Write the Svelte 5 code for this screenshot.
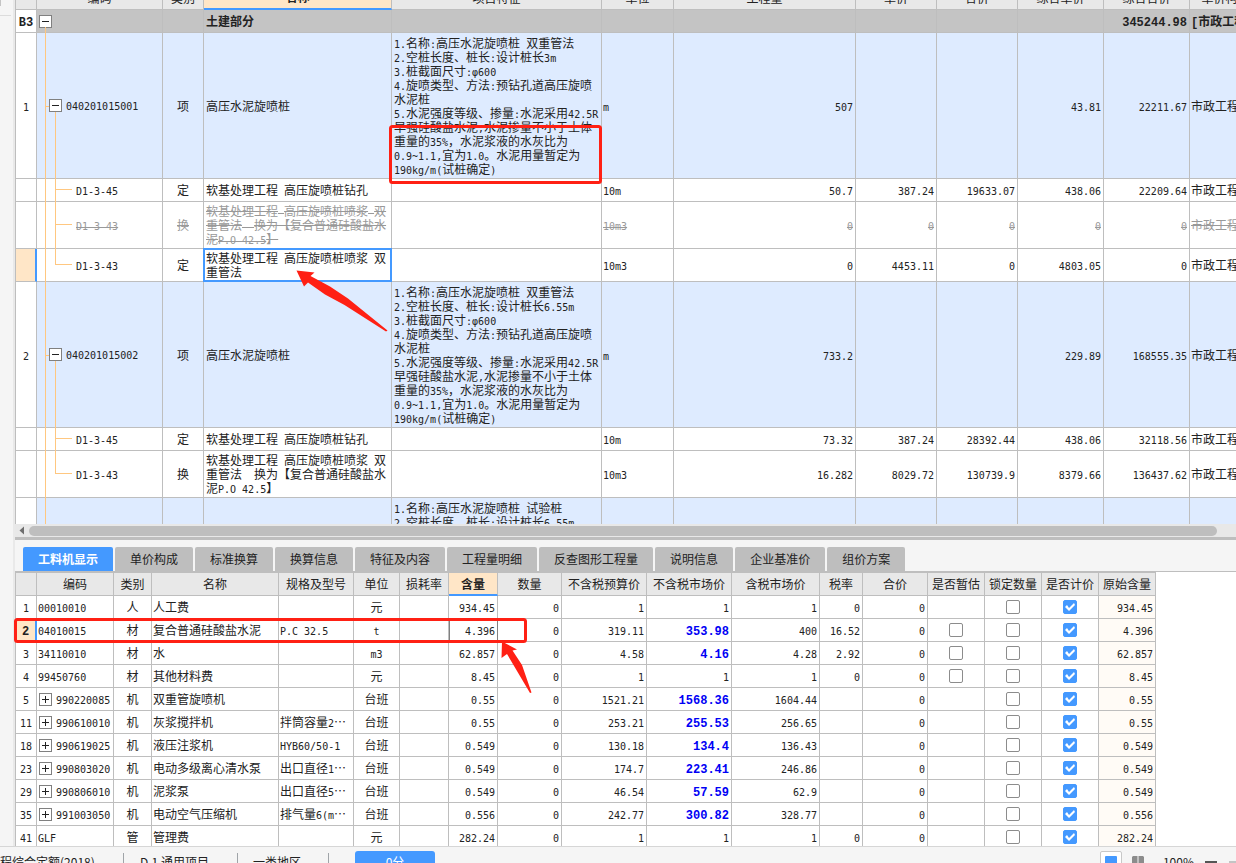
<script>
  const billColumns = [
    { label: '', w: 21 },
    { label: '编码', w: 126 },
    { label: '类别', w: 41 },
    { label: '名称', w: 188, current: true },
    { label: '项目特征', w: 210 },
    { label: '单位', w: 72 },
    { label: '工程量', w: 182 },
    { label: '单价', w: 81 },
    { label: '合价', w: 81 },
    { label: '综合单价', w: 86 },
    { label: '综合合价', w: 86 },
    { label: '单价构成文件', w: 0 }
  ];

  const features = (len, kind) => `1.名称:高压水泥旋喷桩 ${kind}
2.空桩长度、桩长:设计桩长${len}m
3.桩截面尺寸:φ600
4.旋喷类型、方法:预钻孔道高压旋喷
水泥桩
5.水泥强度等级、掺量:水泥采用42.5R
早强硅酸盐水泥,水泥掺量不小于土体
重量的35%，水泥浆液的水灰比为
0.9~1.1,宜为1.0。水泥用量暂定为
190kg/m(试桩确定)`;

  const bill = [
    { kind: 'group', h: 23, no: 'B3', code: '', type: '', name: '土建部分', feat: '', unit: '', nums: ['', '', '', '', '345244.98'], file: '[市政工程' },
    { kind: 'item', h: 146, no: '1', code: '040201015001', type: '项', name: '高压水泥旋喷桩', feat: features('3', '双重管法'), unit: 'm', nums: ['507', '', '', '43.81', '22211.67'], file: '市政工程' },
    { kind: 'quota', h: 23, no: '', code: 'D1-3-45', type: '定', name: '软基处理工程 高压旋喷桩钻孔', feat: '', unit: '10m', nums: ['50.7', '387.24', '19633.07', '438.06', '22209.64'], file: '市政工程' },
    { kind: 'quota', struck: true, h: 47, no: '', code: 'D1-3-43', type: '换', name: '软基处理工程 高压旋喷桩喷浆 双\n重管法  换为【复合普通硅酸盐水\n泥P.O 42.5】', feat: '', unit: '10m3', nums: ['0', '0', '0', '0', '0'], file: '市政工程' },
    { kind: 'quota', last: true, current: true, h: 33, no: '', code: 'D1-3-43', type: '定', name: '软基处理工程 高压旋喷桩喷浆 双\n重管法', feat: '', unit: '10m3', nums: ['0', '4453.11', '0', '4803.05', '0'], file: '市政工程' },
    { kind: 'item', h: 146, no: '2', code: '040201015002', type: '项', name: '高压水泥旋喷桩', feat: features('6.55', '双重管法'), unit: 'm', nums: ['733.2', '', '', '229.89', '168555.35'], file: '市政工程' },
    { kind: 'quota', h: 23, no: '', code: 'D1-3-45', type: '定', name: '软基处理工程 高压旋喷桩钻孔', feat: '', unit: '10m', nums: ['73.32', '387.24', '28392.44', '438.06', '32118.56'], file: '市政工程' },
    { kind: 'quota', last: true, h: 47, no: '', code: 'D1-3-43', type: '换', name: '软基处理工程 高压旋喷桩喷浆 双\n重管法  换为【复合普通硅酸盐水\n泥P.O 42.5】', feat: '', unit: '10m3', nums: ['16.282', '8029.72', '130739.9', '8379.66', '136437.62'], file: '市政工程' },
    { kind: 'item', h: 146, no: '3', code: '040201015003', type: '项', name: '高压水泥旋喷桩', feat: features('6.55', '试验桩'), unit: 'm', nums: ['', '', '', '', ''], file: '市政工程' }
  ];

  const tabs = ['工料机显示', '单价构成', '标准换算', '换算信息', '特征及内容', '工程量明细', '反查图形工程量', '说明信息', '企业基准价', '组价方案'];

  const resColumns = [
    ['', 21], ['编码', 77], ['类别', 38], ['名称', 127], ['规格及型号', 75], ['单位', 46],
    ['损耗率', 49], ['含量', 49], ['数量', 64], ['不含税预算价', 85], ['不含税市场价', 85],
    ['含税市场价', 88], ['税率', 43], ['合价', 65], ['是否暂估', 57], ['锁定数量', 57],
    ['是否计价', 57], ['原始含量', 57]
  ];

  // no, code, type, name, spec, unit, content, budget price, market price, taxed price, tax rate, provisional box, expandable
  const resources = [
    ['1', '00010010', '人', '人工费', '', '元', '934.45', '1', '1', '1', '0', false, false],
    ['2', '04010015', '材', '复合普通硅酸盐水泥', 'P.C 32.5', 't', '4.396', '319.11', '353.98', '400', '16.52', true, false],
    ['3', '34110010', '材', '水', '', 'm3', '62.857', '4.58', '4.16', '4.28', '2.92', true, false],
    ['4', '99450760', '材', '其他材料费', '', '元', '8.45', '1', '1', '1', '0', true, false],
    ['5', '990220085', '机', '双重管旋喷机', '', '台班', '0.55', '1521.21', '1568.36', '1604.44', '', false, true],
    ['11', '990610010', '机', '灰浆搅拌机', '拌筒容量2…', '台班', '0.55', '253.21', '255.53', '256.65', '', false, true],
    ['18', '990619025', '机', '液压注浆机', 'HYB60/50-1', '台班', '0.549', '130.18', '134.4', '136.43', '', false, true],
    ['23', '990803020', '机', '电动多级离心清水泵', '出口直径1…', '台班', '0.549', '174.7', '223.41', '246.86', '', false, true],
    ['29', '990806010', '机', '泥浆泵', '出口直径5…', '台班', '0.549', '46.54', '57.59', '62.9', '', false, true],
    ['35', '991003050', '机', '电动空气压缩机', '排气量6(m…', '台班', '0.556', '242.77', '300.82', '328.77', '', false, true],
    ['41', 'GLF', '管', '管理费', '', '元', '282.24', '1', '1', '1', '0', false, false]
  ];

  // Splits a string into runs so that Latin text gets the half-width face.
  const runs = (s) =>
    s.split(/([\x20-\x7eφ]+)/).filter(Boolean).map((t) => ({ t, latin: /^[\x20-\x7eφ]/.test(t) }));
</script>

{#snippet mixed(s)}{#each runs(s) as r}{#if r.latin}<span class="lat">{r.t}</span>{:else}<span>{r.t}</span>{/if}{/each}{/snippet}

{#snippet toggle(plus)}
  <button class="toggle" aria-label={plus ? '展开' : '折叠'}>
    <svg viewBox="0 0 11 11" width="11" height="11" aria-hidden="true">
      <path d={plus ? 'M2 5.5h7M5.5 2v7' : 'M2 5.5h7'} stroke="#222" fill="none" />
    </svg>
  </button>
{/snippet}

<div class="page" lang="zh-CN">
  <div class="body">
    <aside class="rail"><i class="stub"></i><i class="rule"></i></aside>

    <main>
      <section class="bill">
        <table>
          <colgroup>
            {#each billColumns as c}<col style={c.w ? `width:${c.w}px` : ''} />{/each}
          </colgroup>
          <thead>
            <tr>
              {#each billColumns as c}<th class:current={c.current}>{c.label}</th>{/each}
            </tr>
          </thead>
          <tbody>
            {#each bill as r}
              <tr class={r.kind} class:struck={r.struck} style="height:{r.h}px">
                <td class="no" class:current={r.current}><span class="lat">{r.no}</span></td>
                <td class="code">
                  {#if r.kind === 'group'}
                    <i class="root-start"></i>
                    <div class="node l0">{@render toggle(false)}</div>
                  {:else}
                    <i class="root"></i>
                    {#if r.kind === 'item'}
                      <i class="twig"></i><i class="down"></i>
                      <div class="node l1">{@render toggle(false)}<span class="lat">{r.code}</span></div>
                    {:else}
                      <i class="stem" class:last={r.last}></i><i class="branch"></i>
                      <div class="node l2"><span class="lat">{r.code}</span></div>
                    {/if}
                  {/if}
                </td>
                <td class="mid">{r.type}</td>
                <td class="pre" class:picked={r.current}>{@render mixed(r.name)}</td>
                <td class="pre">{@render mixed(r.feat)}</td>
                <td><span class="lat">{r.unit}</span></td>
                {#each r.nums as n}<td class="num"><span class="lat">{n}</span></td>{/each}
                <td>{@render mixed(r.file)}</td>
              </tr>
            {/each}
          </tbody>
        </table>
      </section>

      <div class="hscroll">
        <svg width="14" height="13" viewBox="0 0 14 13" aria-hidden="true"><path d="M9 2.5v8L4.500 6.500z" fill="#6e6e6e" /></svg>
        <div class="thumb"></div>
      </div>
      <div class="splitter"></div>

      <nav class="tabs">
        {#each tabs as t, i}<button class:active={i === 0}>{t}</button>{/each}
      </nav>

      <section class="res">
        <table>
          <colgroup>
            {#each resColumns as c}<col style="width:{c[1]}px" />{/each}
          </colgroup>
          <thead>
            <tr>
              {#each resColumns as c}<th class:current={c[0] === '含量'}>{c[0]}</th>{/each}
            </tr>
          </thead>
          <tbody>
            {#each resources as r, i}
              <tr>
                <td class="no" class:current={i === 1}><span class="lat">{r[0]}</span></td>
                <td>
                  {#if r[12]}
                    <div class="node l0">{@render toggle(true)}<span class="lat">{r[1]}</span></div>
                  {:else}<span class="lat">{r[1]}</span>{/if}
                </td>
                <td class="mid">{r[2]}</td>
                <td>{r[3]}</td>
                <td>{@render mixed(r[4])}</td>
                <td class="mid">{@render mixed(r[5])}</td>
                <td></td>
                <td class="num" class:focus={i === 1}><span class="lat">{r[6]}</span></td>
                <td class="num"><span class="lat">0</span></td>
                <td class="num"><span class="lat">{r[7]}</span></td>
                <td class="num" class:market={r[8] !== '1'}><span class="lat">{r[8]}</span></td>
                <td class="num"><span class="lat">{r[9]}</span></td>
                <td class="num"><span class="lat">{r[10]}</span></td>
                <td class="num"><span class="lat">0</span></td>
                <td class="mid">{#if r[11]}<input type="checkbox" aria-label="是否暂估" />{/if}</td>
                <td class="mid"><input type="checkbox" aria-label="锁定数量" /></td>
                <td class="mid"><input type="checkbox" aria-label="是否计价" checked /></td>
                <td class="num origin"><span class="lat">{r[6]}</span></td>
              </tr>
            {/each}
          </tbody>
        </table>
      </section>
    </main>
  </div>

  <footer>
    <div class="status">
      <span class="seg first">程综合定额(2018)</span>
      <span class="seg second">D.1 通用项目</span>
      <span class="seg third">一类地区</span>
      <button class="score">0分</button>
      <div class="view">
        <button class="mode on" aria-label="单窗口">
          <svg width="12" height="12" viewBox="0 0 12 12" aria-hidden="true"><path d="M1 0h10a1 1 0 0 1 1 1v7H7.500v2H10v2H2v-2h2.500V8H0V1a1 1 0 0 1 1-1z" fill="#4499ff" /></svg>
        </button>
        <button class="mode" aria-label="双窗口">
          <svg width="12" height="12" viewBox="0 0 12 12" aria-hidden="true"><path d="M1 0h4.500v12H0V1zM6.500 0H11l1 1v11H6.500z" fill="#8c8c8c" /></svg>
        </button>
        <span class="zoom">100%</span>
        <i class="minus"></i>
        <i class="track"></i>
      </div>
    </div>
  </footer>

  <svg class="marks" aria-hidden="true">
    <g fill="none" stroke="#ff2014" stroke-width="3">
      <rect x="390.5" y="126.500" width="210" height="56" rx="2" />
      <rect x="15.500" y="619.500" width="510" height="22" rx="2" />
    </g>
    <g fill="#ff2014">
      <path d="M296.500 270.500L314.500 272.500L310.500 276L330 286.500L348 298.500L387.500 330.500L386 331.500L344.500 305L325 294.500L308 282.500L304 286.500z" />
      <path d="M502 641.500L517 649.500L512.500 650.500L522 665L531.500 692.500L530 693L517 671L507 654L501.500 658z" />
    </g>
  </svg>
</div>

<style>
  :global(body) {
    margin: 0;
    overflow: hidden;
  }
  .page {
    position: relative;
    height: 100vh;
    display: flex;
    flex-direction: column;
    background: #f5f5f5;
    color: #222;
    font: 12px/14px 'Noto Sans CJK SC', sans-serif;
  }
  button {
    font: inherit;
    color: inherit;
    border: 0;
    padding: 0;
    margin: 0;
    background: none;
  }
  .body {
    flex: 1;
    min-height: 0;
    display: flex;
  }
  .rail {
    width: 13px;
    flex: none;
    border-right: 2px solid #e9e9e9;
  }
  .rail i {
    display: block;
  }
  .stub {
    width: 1px;
    height: 6px;
    background: #c4c4c4;
  }
  .rule {
    width: 11px;
    height: 1px;
    margin-top: 9px;
    background: #dcdcdc;
  }
  main {
    flex: 1;
    min-width: 0;
    display: grid;
    grid-template-columns: minmax(0, 1fr);
    grid-template-rows: minmax(0, 524fr) auto auto auto minmax(0, 274fr);
  }
  section {
    overflow: hidden;
    background: #fff;
  }

  /* grids */
  table {
    table-layout: fixed;
    border-collapse: separate;
    border-spacing: 0;
    border-left: 1px solid #bebebe;
  }
  .bill table {
    width: 100%;
    min-width: 1271px;
    margin-top: -14px;
  }
  .res table {
    width: 1px;
    border-top: 1px solid #bebebe;
  }
  th,
  td {
    box-sizing: border-box;
    position: relative;
    padding: 0 2px 0 1px;
    border-right: 1px solid #bebebe;
    border-bottom: 1px solid #bebebe;
    white-space: nowrap;
    overflow: hidden;
    text-align: left;
    vertical-align: middle;
  }
  th {
    height: 24px;
    padding: 0;
    background: #e8e8e8;
    font-weight: 400;
    text-align: center;
  }
  .res th,
  .res tr {
    height: 23px;
  }
  th.current {
    background: #ffe6c7;
    border-bottom: 2px solid #4499ff;
    font-weight: 700;
  }
  .lat {
    font-family: 'DejaVu Sans Mono', monospace;
    font-size: 10px;
    line-height: 0;
  }
  td.pre {
    padding-left: 2px;
    white-space: pre;
  }
  .mid {
    padding: 0;
    text-align: center;
  }
  .num {
    text-align: right;
  }
  .no {
    padding: 0;
    background: #fff;
    text-align: center;
  }
  .no.current {
    background: #ffe6c7;
    border-right: 2px solid #4499ff;
    font-weight: 700;
  }
  .group td {
    background: #c4c4c4;
    font-weight: 700;
  }
  .group td.no {
    background: #fff;
  }
  .group .lat,
  .market .lat,
  .no.current .lat {
    font-family: 'Liberation Mono', monospace;
    font-size: 12px;
    font-weight: 700;
  }
  .item td:not(.no) {
    background: #deebff;
  }
  .struck td {
    color: #999;
  }
  .struck td:not(.code),
  .struck .lat {
    text-decoration: line-through;
  }
  .struck .lat {
    display: inline-block;
  }
  td.picked {
    overflow: visible;
  }
  td.picked::after {
    content: '';
    position: absolute;
    inset: -1px;
    border: 2px solid #4499ff;
  }
  .market {
    color: #0000f5;
  }
  .origin {
    background: #fffbf6;
  }
  td.focus {
    border-right: 1px solid #808080;
    box-shadow: inset 1px 0 #808080;
  }

  /* tree */
  td.code {
    overflow: visible;
    padding: 0;
  }
  .node {
    display: flex;
    align-items: center;
  }
  .node .lat {
    padding-top: 3px;
    line-height: 14px;
  }
  td.code .l0 {
    padding-left: 2px;
  }
  .l0 {
    gap: 4px;
    padding-left: 1px;
  }
  .l1 {
    gap: 4px;
    padding-left: 12px;
  }
  .l2 {
    padding-left: 39px;
  }
  .toggle {
    box-sizing: border-box;
    flex: none;
    width: 13px;
    height: 13px;
    border: 1px solid #808080;
    background: #fff;
  }
  .toggle svg {
    display: block;
  }
  td.code i {
    position: absolute;
    background: #ffc780;
    width: 1px;
  }
  .root-start {
    left: 8px;
    top: 17px;
    bottom: -1px;
  }
  .root {
    left: 8px;
    top: 0;
    bottom: -1px;
  }
  .down {
    left: 18px;
    top: calc(50% + 6px);
    bottom: -1px;
  }
  .stem {
    left: 18px;
    top: 0;
    bottom: -1px;
  }
  .stem.last {
    bottom: 50%;
  }
  td.code .twig {
    left: 9px;
    top: 50%;
    width: 3px;
    height: 1px;
  }
  td.code .branch {
    left: 18px;
    top: calc(50% - 1px);
    width: 17px;
    height: 1px;
  }

  input {
    appearance: none;
    box-sizing: border-box;
    display: block;
    width: 14px;
    height: 14px;
    margin: 0 auto;
    border: 1px solid #8c8c8c;
    border-radius: 2px;
    background: #fff;
  }
  input:checked {
    border-color: #4499ff;
    background: #4499ff;
  }
  input:checked::before {
    content: '';
    display: block;
    width: 12px;
    height: 12px;
    background: #fff;
    clip-path: polygon(1px 6px, 3px 4px, 5px 7px, 10px 2px, 11px 4px, 5px 10px);
  }

  /* scrollbar, splitter, tabs */
  .hscroll {
    display: flex;
    align-items: center;
    height: 13px;
    padding-right: 19px;
    background: #e8e8e8;
  }
  .thumb {
    flex: 1;
    height: 10px;
    border-radius: 5px;
    background: #bebebe;
  }
  .splitter {
    height: 3px;
    background: #bebebe;
  }
  .tabs {
    display: flex;
    gap: 2px;
    padding: 7px 8px 0;
    border-bottom: 1px solid #bebebe;
  }
  .tabs button {
    height: 24px;
    padding: 0 15px;
    border-radius: 2px 2px 0 0;
    background: #bebebe;
    white-space: nowrap;
  }
  .tabs .active {
    background: #4499ff;
    color: #fff;
    font-weight: 700;
  }

  /* status bar */
  footer {
    height: 16px;
    border-top: 1px solid #d6d6d6;
    overflow: hidden;
  }
  .status {
    display: flex;
    align-items: center;
    height: 30px;
    white-space: nowrap;
  }
  .seg {
    box-sizing: border-box;
    line-height: 18px;
    border-right: 1px solid #a0a4a8;
  }
  .first {
    width: 124px;
  }
  .second {
    width: 114px;
    padding-left: 16px;
  }
  .third {
    width: 91px;
    padding-left: 15px;
  }
  .score {
    width: 80px;
    height: 22px;
    margin-left: 26px;
    border-radius: 3px;
    background: #4499ff;
    color: #fff;
  }
  .view {
    display: flex;
    align-items: center;
    margin-left: auto;
  }
  .mode {
    display: grid;
    place-items: center;
    box-sizing: border-box;
    width: 22px;
    height: 22px;
    margin-right: 5px;
  }
  .mode.on {
    border: 1px solid #c8c8c8;
    border-radius: 2px;
    background: #fff;
  }
  .zoom {
    margin: 0 11px 0 9px;
  }
  .minus {
    width: 12px;
    height: 2px;
    background: #555;
  }
  .track {
    width: 7px;
    height: 2px;
    margin-left: 12px;
    background: #c4c4c4;
  }

  .marks {
    position: absolute;
    inset: 0;
    width: 100%;
    height: 100%;
    pointer-events: none;
  }
</style>
